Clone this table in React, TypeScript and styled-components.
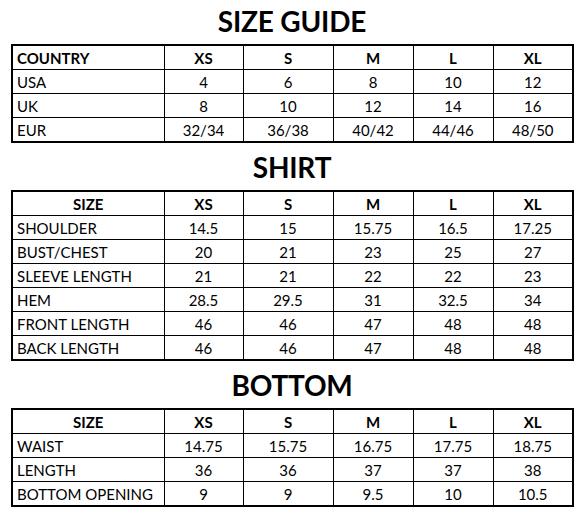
import React from "react"
import styled, { createGlobalStyle } from "styled-components"

const GlobalStyle = createGlobalStyle`
  html, body {
    margin: 0;
    padding: 0;
    background: #ffffff;
  }
  body {
    font-family: Lato, "Open Sans", sans-serif;
    color: #000000;
  }
`

type Section = {
  title: string
  first: string
  rows: string[][]
}

const sizes = ["XS", "S", "M", "L", "XL"]

const sections: Section[] = [
  {
    title: "SIZE GUIDE",
    first: "COUNTRY",
    rows: [
      ["USA", "4", "6", "8", "10", "12"],
      ["UK", "8", "10", "12", "14", "16"],
      ["EUR", "32/34", "36/38", "40/42", "44/46", "48/50"],
    ],
  },
  {
    title: "SHIRT",
    first: "SIZE",
    rows: [
      ["SHOULDER", "14.5", "15", "15.75", "16.5", "17.25"],
      ["BUST/CHEST", "20", "21", "23", "25", "27"],
      ["SLEEVE LENGTH", "21", "21", "22", "22", "23"],
      ["HEM", "28.5", "29.5", "31", "32.5", "34"],
      ["FRONT LENGTH", "46", "46", "47", "48", "48"],
      ["BACK LENGTH", "46", "46", "47", "48", "48"],
    ],
  },
  {
    title: "BOTTOM",
    first: "SIZE",
    rows: [
      ["WAIST", "14.75", "15.75", "16.75", "17.75", "18.75"],
      ["LENGTH", "36", "36", "37", "37", "38"],
      ["BOTTOM OPENING", "9", "9", "9.5", "10", "10.5"],
    ],
  },
]

const colWidths = [152, 79, 90, 80, 80, 80]

const SizeGuide = () => {
  return (
    <>
      <GlobalStyle />
      <Page>
        {sections.map(s => (
          <Block key={s.title}>
            <Title>{s.title}</Title>
            <Chart>
              <colgroup>
                {colWidths.map((w, j) => (
                  <col key={j} style={{ width: w }} />
                ))}
              </colgroup>
              <thead>
                <tr>
                  <HeadCell $label={s.first === "COUNTRY"}>{s.first}</HeadCell>
                  {sizes.map(sz => (
                    <HeadCell key={sz}>{sz}</HeadCell>
                  ))}
                </tr>
              </thead>
              <tbody>
                {s.rows.map(r => (
                  <tr key={r[0]}>
                    <LabelCell>{r[0]}</LabelCell>
                    {r.slice(1).map((v, k) => (
                      <ValueCell key={k}>{v}</ValueCell>
                    ))}
                  </tr>
                ))}
              </tbody>
            </Chart>
          </Block>
        ))}
      </Page>
    </>
  )
}

export default SizeGuide

const Page = styled.div`
  width: 588px;
  height: 521px;
  padding: 4px 0 0 11px;
  box-sizing: border-box;
  display: flex;
  flex-direction: column;
  gap: 7px;
`

const Block = styled.section`
  display: flex;
  flex-direction: column;
  align-items: stretch;
  width: 562px;
`

const Title = styled.h2`
  margin: 0 0 6px;
  font-size: 28px;
  line-height: 34px;
  font-weight: 700;
  text-align: center;
  letter-spacing: -0.2px;
`

const Chart = styled.table`
  width: 562px;
  table-layout: fixed;
  border-collapse: collapse;
  border: 2px solid #000;
  font-size: 15px;

  td, th {
    border: 1px solid #000;
    height: 23px;
    padding: 0 4px;
    line-height: 22px;
    white-space: nowrap;
  }
`

const HeadCell = styled.th<{ $label?: boolean }>`
  font-weight: 700;
  text-align: ${p => (p.$label ? "left" : "center")};
`

const LabelCell = styled.td`
  text-align: left;
`

const ValueCell = styled.td`
  text-align: center;
`
